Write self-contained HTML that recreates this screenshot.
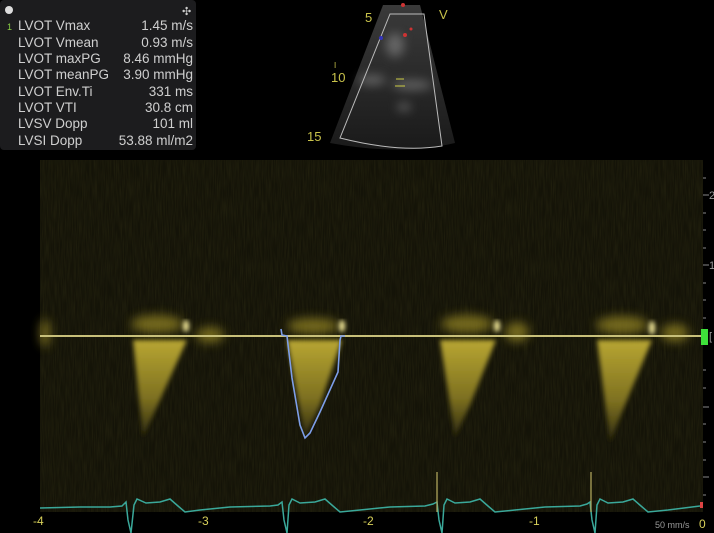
<!DOCTYPE html>
<html><head><meta charset="utf-8"><style>
html,body{margin:0;padding:0;background:#000;width:714px;height:533px;overflow:hidden}
svg{display:block}
.t{font-family:"Liberation Sans",sans-serif}
</style></head><body>
<svg width="714" height="533" viewBox="0 0 714 533" xmlns="http://www.w3.org/2000/svg">
<defs>
<filter id="b2"><feGaussianBlur stdDeviation="2.5"/></filter>
<filter id="b4" x="-50%" y="-50%" width="200%" height="200%"><feGaussianBlur stdDeviation="5"/></filter>
<filter id="nz" x="0" y="0" width="100%" height="100%">
<feTurbulence type="fractalNoise" baseFrequency="0.9 0.05" numOctaves="2" seed="3"/>
<feColorMatrix values="0 0 0 0 0.3  0 0 0 0 0.28  0 0 0 0 0.05  0 0 0 0.5 -0.15"/>
</filter>
<linearGradient id="tri" x1="0" y1="0" x2="0" y2="1">
<stop offset="0" stop-color="#b8a632"/><stop offset="0.6" stop-color="#7d7020"/><stop offset="1" stop-color="#2e2a0e"/>
</linearGradient>
<linearGradient id="fan" x1="0" y1="0" x2="0" y2="1">
<stop offset="0" stop-color="#3a3a3a"/><stop offset="0.5" stop-color="#2a2a2a"/><stop offset="1" stop-color="#1a1a1a"/>
</linearGradient>
</defs>
<rect x="40" y="160" width="663" height="352" fill="#141308"/>
<rect x="40" y="160" width="663" height="352" filter="url(#nz)" opacity="0.35"/>
<g filter="url(#b2)" fill="url(#tri)">
<polygon points="133,340 187,340 160,400 143,437"/>
<polygon points="287,340 342,340 320,405 305,437"/>
<polygon points="440,340 496,340 470,405 455,437"/>
<polygon points="597,340 652,340 625,405 610,442"/>
</g>
<g filter="url(#b4)" fill="#8a7d22" opacity="0.8">
<ellipse cx="157" cy="324" rx="26" ry="9"/>
<ellipse cx="313" cy="326" rx="26" ry="8"/>
<ellipse cx="467" cy="324" rx="26" ry="9"/>
<ellipse cx="622" cy="325" rx="26" ry="9"/>
<ellipse cx="45" cy="333" rx="5" ry="14"/>
<ellipse cx="210" cy="335" rx="14" ry="8"/>
<ellipse cx="517" cy="332" rx="12" ry="10"/>
<ellipse cx="675" cy="333" rx="14" ry="9"/>
</g>
<g filter="url(#b2)" fill="#f4ea9a">
<ellipse cx="186" cy="326" rx="3" ry="6"/><ellipse cx="342" cy="326" rx="3" ry="6"/>
<ellipse cx="497" cy="326" rx="3" ry="6"/><ellipse cx="652" cy="328" rx="3" ry="7"/>
</g>
<line x1="40" y1="336" x2="703" y2="336" stroke="#c8c07a" stroke-width="2"/>
<rect x="701" y="329" width="7" height="16" fill="#3ee03a"/>
<polyline points="281,329 282,335 287,336 292,378 300,425 305,438 310,433 320,412 338,372 340,340 341,336 345,336" fill="none" stroke="#7d9ee8" stroke-width="1.6"/>
<g stroke="#888" stroke-width="1">
<line x1="703" y1="178" x2="706" y2="178"/><line x1="703" y1="195" x2="709" y2="195"/><line x1="703" y1="213" x2="706" y2="213"/><line x1="703" y1="230" x2="706" y2="230"/><line x1="703" y1="248" x2="706" y2="248"/><line x1="703" y1="265" x2="709" y2="265"/><line x1="703" y1="283" x2="706" y2="283"/><line x1="703" y1="300" x2="706" y2="300"/><line x1="703" y1="318" x2="706" y2="318"/><line x1="703" y1="370" x2="706" y2="370"/><line x1="703" y1="388" x2="706" y2="388"/><line x1="703" y1="407" x2="709" y2="407"/><line x1="703" y1="424" x2="706" y2="424"/><line x1="703" y1="442" x2="706" y2="442"/><line x1="703" y1="460" x2="706" y2="460"/><line x1="703" y1="477" x2="709" y2="477"/><line x1="703" y1="495" x2="706" y2="495"/>
</g>
<g class="t" fill="#999" font-size="11"><text x="709" y="199">2</text><text x="709" y="269">1</text><text x="709" y="340">[</text></g>
<polyline fill="none" stroke="#3aa89a" stroke-width="1.5" points="40,508 80,507 110,507 122,506 126,502 128,520 131,533 134,505 137,499 146,503 160,502 170,499 178,506 185,512 200,510 230,507 270,506 278,505 282,502 284,520 287,533 289,505 292,499 300,503 315,502 325,499 333,506 340,512 360,510 390,507 425,506 433,504 437,502 439,520 442,533 444,505 447,499 455,503 470,502 480,499 488,506 495,512 515,510 545,507 580,506 587,504 590,502 592,520 595,533 597,505 600,499 608,503 623,502 633,499 641,506 648,512 668,510 700,506"/>
<g stroke="#b8ad60" stroke-width="1.2"><line x1="437" y1="472" x2="437" y2="512"/><line x1="591" y1="472" x2="591" y2="512"/></g>
<rect x="700" y="502" width="3" height="6" fill="#d44"/>
<g class="t" fill="#d8d05a" font-size="12"><text x="33" y="525">-4</text><text x="198" y="525">-3</text><text x="363" y="525">-2</text><text x="529" y="525">-1</text><text x="699" y="528">0</text></g>
<text class="t" x="655" y="528" fill="#999" font-size="9">50 mm/s</text>
<rect x="0" y="0" width="196" height="150" rx="4" fill="#1c1c1e"/>
<circle cx="9" cy="10" r="4" fill="#ddd"/><text class="t" x="182" y="15" fill="#ccc" font-size="11">✣</text>
<g class="t" fill="#cfcfcf" font-size="13.5">
<text x="7" y="30" fill="#8c4" font-size="9">1</text>
<text x="18" y="30">LVOT Vmax</text><text x="193" y="30" text-anchor="end">1.45 m/s</text>
<text x="18" y="47">LVOT Vmean</text><text x="193" y="47" text-anchor="end">0.93 m/s</text>
<text x="18" y="63">LVOT maxPG</text><text x="193" y="63" text-anchor="end">8.46 mmHg</text>
<text x="18" y="79">LVOT meanPG</text><text x="193" y="79" text-anchor="end">3.90 mmHg</text>
<text x="18" y="96">LVOT Env.Ti</text><text x="193" y="96" text-anchor="end">331 ms</text>
<text x="18" y="112">LVOT VTI</text><text x="193" y="112" text-anchor="end">30.8 cm</text>
<text x="18" y="128">LVSV Dopp</text><text x="193" y="128" text-anchor="end">101 ml</text>
<text x="18" y="145">LVSI Dopp</text><text x="193" y="145" text-anchor="end">53.88 ml/m2</text>
</g>
<path d="M383,5 L420,5 L455,143 Q400,156 330,143 Z" fill="url(#fan)"/>
<g filter="url(#b4)" fill="#888" opacity="0.6">
<ellipse cx="372" cy="80" rx="14" ry="5"/><ellipse cx="412" cy="85" rx="20" ry="5"/><ellipse cx="404" cy="107" rx="7" ry="4"/><ellipse cx="395" cy="45" rx="9" ry="12"/>
</g>
<path d="M390,14 L424,14 L442,146 Q400,153 340,138 Z" fill="none" stroke="#bbb" stroke-width="1"/>
<g fill="#c33"><circle cx="405" cy="35" r="2"/><circle cx="411" cy="29" r="1.5"/><circle cx="403" cy="5" r="2"/></g>
<circle cx="381" cy="38" r="2" fill="#33b"/>
<line x1="396" y1="79" x2="404" y2="79" stroke="#cc4"/><line x1="395" y1="86" x2="405" y2="86" stroke="#cc4"/>
<g class="t" fill="#c8c24a" font-size="13"><text x="365" y="22">5</text><text x="331" y="82">10</text><text x="307" y="141">15</text><text x="439" y="19" font-size="13">V</text><text x="334" y="68" font-size="8">I</text></g>
</svg>
</body></html>
